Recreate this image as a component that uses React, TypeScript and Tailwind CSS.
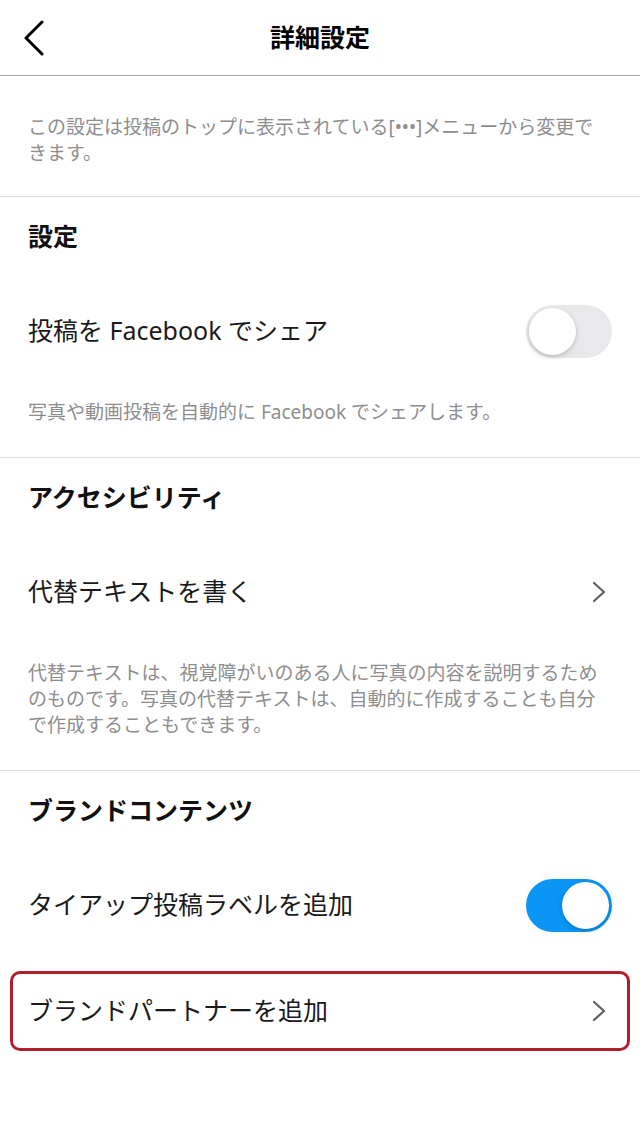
const jp = { fontFamily: '"Noto Sans", "Noto Sans CJK JP", sans-serif' };

function Chevron() {
  return (
    <svg width="14" height="22" viewBox="0 0 14 22" className="shrink-0">
      <polyline points="2,2 12,11 2,20" fill="none" stroke="#5f5f5f" strokeWidth="2.2" strokeLinecap="round" strokeLinejoin="round" />
    </svg>
  );
}

function Toggle({ on }: { on?: boolean }) {
  return (
    <div className={`flex h-[53px] w-[86px] shrink-0 items-center rounded-full p-[3px] ${on ? "justify-end bg-[#0b95f4]" : "justify-start bg-[#e9e9eb]"}`}>
      <div className="h-[47px] w-[47px] rounded-full bg-white shadow-[0_2px_5px_rgba(0,0,0,0.2)]" />
    </div>
  );
}

function SectionHeader({ title }: { title: string }) {
  return (
    <div className="flex h-[80px] items-center px-7">
      <h2 className="text-[25px] font-bold text-[#111]">{title}</h2>
    </div>
  );
}

function Row({ label, right }: { label: string; right: React.ReactNode }) {
  return (
    <div className="flex h-[108px] items-center justify-between pl-7 pr-7">
      <span className="text-[25px] text-[#1a1a1a]">{label}</span>
      {right}
    </div>
  );
}

function Desc({ children }: { children: React.ReactNode }) {
  return <p className="px-7 pt-[14px] pb-[32px] text-[19px] leading-[26px] text-[#8e8e8e]">{children}</p>;
}

export default function App() {
  return (
    <div className="min-h-[1139px] w-[640px] bg-white" style={jp}>
      <header className="grid h-[76px] grid-cols-[80px_1fr_80px] items-center border-b border-[#a8a8a8]">
        <div className="pl-6">
          <svg width="20" height="36" viewBox="0 0 20 36">
            <polyline points="18,2 2,18 18,34" fill="none" stroke="#000" strokeWidth="3" strokeLinecap="round" strokeLinejoin="round" />
          </svg>
        </div>
        <h1 className="text-center text-[25px] font-bold text-black">詳細設定</h1>
        <div />
      </header>

      <p className="border-b border-[#dbdbdb] px-7 pt-[38px] pb-[30px] text-[19px] leading-[26px] text-[#8e8e8e]">
        この設定は投稿のトップに表示されている[•••]メニューから変更で
        <br />
        きます。
      </p>

      {/* 設定 */}
      <section className="border-b border-[#dbdbdb]">
        <SectionHeader title="設定" />
        <Row label="投稿を Facebook でシェア" right={<Toggle />} />
        <Desc>写真や動画投稿を自動的に Facebook でシェアします。</Desc>
      </section>

      {/* アクセシビリティ */}
      <section className="border-b border-[#dbdbdb]">
        <SectionHeader title="アクセシビリティ" />
        <div className="flex h-[108px] items-center justify-between pl-7 pr-[34px]">
          <span className="text-[25px] text-[#1a1a1a]">代替テキストを書く</span>
          <Chevron />
        </div>
        <Desc>
          代替テキストは、視覚障がいのある人に写真の内容を説明するため
          <br />
          のものです。写真の代替テキストは、自動的に作成することも自分
          <br />
          で作成することもできます。
        </Desc>
      </section>

      {/* ブランドコンテンツ */}
      <section>
        <SectionHeader title="ブランドコンテンツ" />
        <Row label="タイアップ投稿ラベルを追加" right={<Toggle on />} />
        <div className="mx-[10px] mt-[12px] flex h-[80px] items-center justify-between rounded-[10px] border-[3px] border-[#b01f2c] pl-[15px] pr-[21px]">
          <span className="text-[25px] text-[#1a1a1a]">ブランドパートナーを追加</span>
          <Chevron />
        </div>
      </section>
    </div>
  );
}
